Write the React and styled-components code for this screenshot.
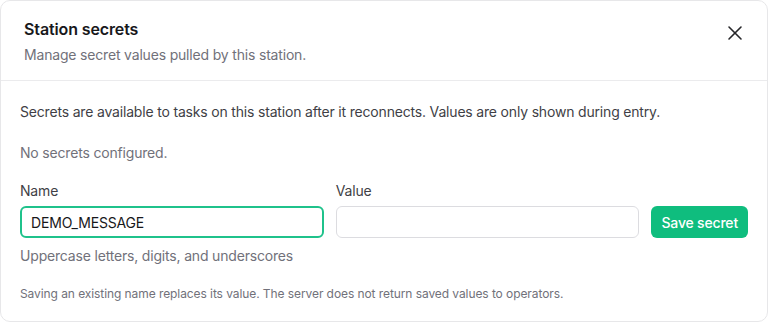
import React, { useState } from 'react'
import styled, { createGlobalStyle } from 'styled-components'
import { X } from 'lucide-react'

const GlobalStyle = createGlobalStyle`
  * { box-sizing: border-box; }
  html, body { margin: 0; padding: 0; background: #ffffff; }
  body {
    font-family: Inter, "Noto Sans", "Liberation Sans", sans-serif;
    letter-spacing: -0.18px;
    -webkit-font-smoothing: antialiased;
  }
`

const Dialog = styled.div`
  width: 768px;
  height: 322px;
  background: #fff;
  border: 1px solid #e7e7e9;
  border-radius: 10px;
  overflow: hidden;
  display: flex;
  flex-direction: column;
`

const Header = styled.div`
  display: flex;
  justify-content: space-between;
  align-items: flex-start;
  padding: 18px 20px 15px 23px;
  border-bottom: 1px solid #ebebed;
`

const Title = styled.h2`
  margin: 0;
  font-size: 16px;
  line-height: 20px;
  font-weight: 600;
  letter-spacing: -0.12px;
  color: #18181b;
`

const Subtitle = styled.p`
  margin: 6px 0 0;
  font-size: 14px;
  line-height: 20px;
  color: #71717a;
`

const CloseButton = styled.button`
  border: none;
  background: none;
  padding: 0;
  margin-top: 2px;
  width: 24px;
  height: 24px;
  display: flex;
  align-items: center;
  justify-content: center;
  color: #27272a;
  cursor: pointer;
`

const Body = styled.div`
  padding: 21px 19px 0;
  display: flex;
  flex-direction: column;
`

const Text = styled.p`
  margin: 0 0 ${(p) => p.$gap || 0}px;
  font-size: ${(p) => p.$size || 14}px;
  line-height: ${(p) => (p.$size === 12 ? 16 : 20)}px;
  letter-spacing: ${(p) => (p.$size === 12 ? '-0.08px' : '-0.18px')};
  color: ${(p) => p.$color || '#3f3f46'};
`

const FormRow = styled.div`
  display: grid;
  grid-template-columns: 1fr 1fr auto;
  column-gap: 12px;
  align-items: end;
`

const Field = styled.label`
  display: flex;
  flex-direction: column;
  gap: 5px;
  padding-top: 1px;
  font-size: 14px;
  line-height: 20px;
  color: #3f3f46;
`

const Input = styled.input`
  height: 32px;
  width: 100%;
  border-radius: 6px;
  border: ${(p) => (p.$focused ? '2px solid #1fc28b' : '1px solid #dcdce0')};
  padding: 0 ${(p) => (p.$focused ? 9 : 10)}px;
  font-family: inherit;
  font-size: 14px;
  letter-spacing: -0.18px;
  color: #18181b;
  outline: none;
  background: #fff;
`

const SaveButton = styled.button`
  height: 32px;
  padding: 0 10px;
  border: none;
  border-radius: 6px;
  background: #0fbd7e;
  color: #fff;
  font-family: inherit;
  font-size: 14px;
  font-weight: 500;
  letter-spacing: -0.18px;
  cursor: pointer;
`

const Hint = styled.p`
  margin: 8px 0 20px;
  font-size: 14px;
  line-height: 20px;
  color: #71717a;
`

export default function App() {
  const [name, setName] = useState('DEMO_MESSAGE')
  const [value, setValue] = useState('')

  return (
    <>
      <GlobalStyle />
      <Dialog>
        <Header>
          <div>
            <Title>Station secrets</Title>
            <Subtitle>Manage secret values pulled by this station.</Subtitle>
          </div>
          <CloseButton aria-label="Close">
            <X size={24} strokeWidth={1.6} />
          </CloseButton>
        </Header>
        <Body>
          <Text $gap={21}>
            Secrets are available to tasks on this station after it reconnects. Values are only shown during entry.
          </Text>
          <Text $gap={17} $color="#71717a">No secrets configured.</Text>
          <FormRow>
            <Field>
              Name
              <Input $focused value={name} onChange={(e) => setName(e.target.value)} />
            </Field>
            <Field>
              Value
              <Input type="password" value={value} onChange={(e) => setValue(e.target.value)} />
            </Field>
            <SaveButton>Save secret</SaveButton>
          </FormRow>
          <Hint>Uppercase letters, digits, and underscores</Hint>
          <Text $size={12} $color="#71717a">
            Saving an existing name replaces its value. The server does not return saved values to operators.
          </Text>
        </Body>
      </Dialog>
    </>
  )
}
